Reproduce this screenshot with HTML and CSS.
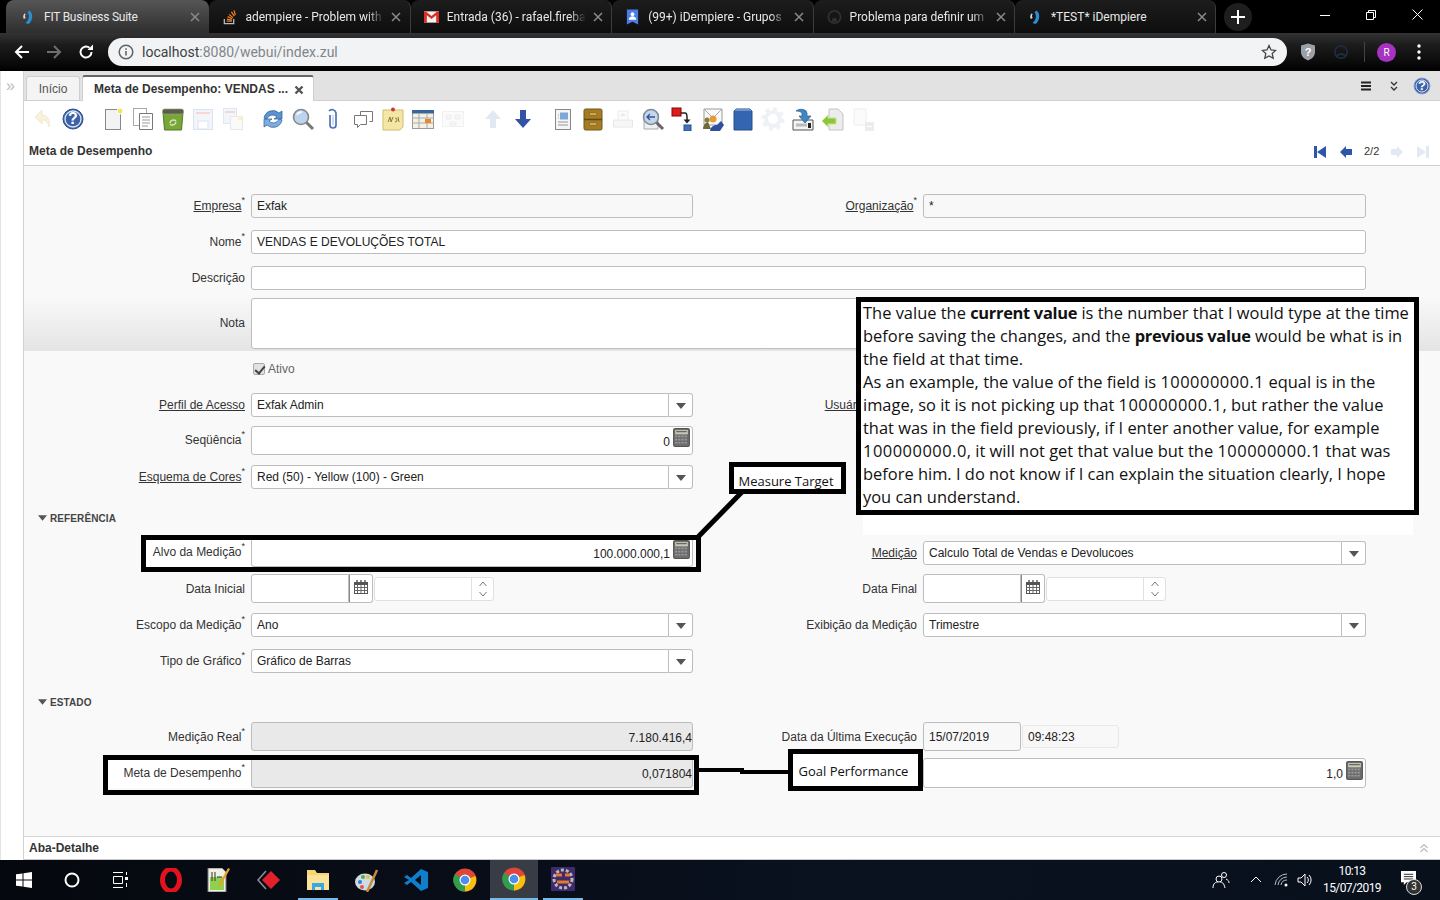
FILE: index.html
```html
<!DOCTYPE html>
<html lang="pt">
<head>
<meta charset="utf-8">
<title>Meta de Desempenho</title>
<link rel="stylesheet" href="styles.css">
</head>
<body>
<svg class="defs" width="0" height="0">
  <symbol id="calc" viewBox="0 0 16 18"><rect x="0.5" y="0.5" width="15" height="17" rx="1.5" fill="#6d6d6d" stroke="#555"/><rect x="2" y="2" width="12" height="4" fill="#c5cdb8"/><path d="M3 3.5h10" stroke="#555"/><path d="M2 8h12M2 11h12M2 14h12" stroke="#9a9a9a" stroke-width="1.6" stroke-dasharray="2 1"/></symbol>
  <symbol id="cal" viewBox="0 0 14 14"><rect x="0.5" y="2.5" width="13" height="11" fill="#fff" stroke="#555"/><rect x="0.5" y="2" width="13" height="3" fill="#555"/><path d="M3 0v3M7 0v3M11 0v3" stroke="#555" stroke-width="1.4"/><path d="M0 7.500h14M0 10.500h14M3.500 5v8M7 5v8M10.500 5v8" stroke="#666"/></symbol>
  <symbol id="caret" viewBox="0 0 10 6"><path d="M0 0h10L5 6z" fill="#555"/></symbol>
  <symbol id="spin" viewBox="0 0 10 18"><path d="M1.500 6 5 2l3.500 4M1.500 12 5 16l3.500-4" fill="none" stroke="#777"/></symbol>
  <symbol id="close" viewBox="0 0 10 10"><path d="M1 1l8 8M9 1l-8 8" stroke="#8a8a8a" stroke-width="1.500"/></symbol>
  <symbol id="swirl" viewBox="0 0 16 16"><path d="M9 1c4 3 4 9 0 14-2 .5-3 0-4-1 3-2 5-7 2-11z" fill="#2a8fd0"/><path d="M4 4c-2 2-2 4-1 6l2-1c-1-2-1-3 0-4z" fill="#cfd8dc"/></symbol>
</svg>

<header class="tabstrip">
  <div class="tab active"><svg class="fav"><use href="#swirl"/></svg><span class="tab-title">FIT Business Suite</span><svg class="tab-x"><use href="#close"/></svg></div>
  <div class="tab"><svg class="fav" viewBox="0 0 16 16"><path d="M2.500 10v5h10v-5" fill="none" stroke="#bcbbbb" stroke-width="1.400"/><path d="M5 12.500h5.500M5.200 10.200l5.400 1M6 7.600l5 2.300M7.500 5.200l4.200 3.500M10 2.600l3.200 4.500M12.800 1l1.500 5" stroke="#f48024" stroke-width="1.300"/></svg><span class="tab-title fade">adempiere - Problem with</span><svg class="tab-x"><use href="#close"/></svg></div>
  <div class="tab"><svg class="fav" viewBox="0 0 16 16"><rect y="2" width="16" height="12" fill="#f2f2f2"/><path d="M0 2v12h3V6l5 4 5-4v8h3V2h-2L8 7 2 2z" fill="#d93025"/></svg><span class="tab-title fade">Entrada (36) - rafael.fireba</span><svg class="tab-x"><use href="#close"/></svg></div>
  <div class="tab"><svg class="fav" viewBox="0 0 16 16"><path d="M2 0h12v16l-6-3-6 3z" fill="#4a7de8"/><circle cx="8" cy="5" r="2" fill="#fff"/><path d="M4 11c0-5 8-5 8 0z" fill="#fff"/></svg><span class="tab-title fade">(99+) iDempiere - Grupos</span><svg class="tab-x"><use href="#close"/></svg></div>
  <div class="tab"><svg class="fav" viewBox="0 0 16 16"><circle cx="8" cy="8" r="6.500" fill="none" stroke="#2f2f2f" stroke-width="2"/><path d="M5 13l1-4h4l1 4" fill="#2f2f2f"/></svg><span class="tab-title fade">Problema para definir um</span><svg class="tab-x"><use href="#close"/></svg></div>
  <div class="tab"><svg class="fav"><use href="#swirl"/></svg><span class="tab-title">*TEST* iDempiere</span><svg class="tab-x"><use href="#close"/></svg></div>
  <div class="newtab"><svg width="14" height="14" viewBox="0 0 14 14"><path d="M7 0v14M0 7h14" stroke="#fff" stroke-width="2"/></svg></div>
  <div class="winctl">
    <div class="winbtn"><svg width="10" height="10" viewBox="0 0 10 10"><path d="M0 5.500h10" stroke="#fff"/></svg></div>
    <div class="winbtn"><svg width="10" height="10" viewBox="0 0 10 10"><path d="M.5 2.500h7v7h-7zM2.500 2.500v-2h7v7h-2" fill="none" stroke="#fff"/></svg></div>
    <div class="winbtn"><svg width="11" height="11" viewBox="0 0 11 11"><path d="M.5.500l10 10M10.500.500l-10 10" stroke="#fff"/></svg></div>
  </div>
</header>

<nav class="browserbar">
  <svg class="nav-ico" viewBox="0 0 16 16"><path d="M15 8H2M8 2 2 8l6 6" fill="none" stroke="#fff" stroke-width="2"/></svg>
  <svg class="nav-ico" viewBox="0 0 16 16"><path d="M1 8h13M8 2l6 6-6 6" fill="none" stroke="#6e6e6e" stroke-width="2"/></svg>
  <svg class="nav-ico" viewBox="0 0 16 16"><path d="M13.500 8A5.500 5.500 0 1 1 11.500 3.800" fill="none" stroke="#fff" stroke-width="2"/><path d="M9.500 6H15V.500z" fill="#fff"/></svg>
  <div class="omnibox">
    <svg class="info" viewBox="0 0 16 16"><circle cx="8" cy="8" r="6.800" fill="none" stroke="#5f6368" stroke-width="1.500"/><path d="M8 7v4.500M8 4.300v1.500" stroke="#5f6368" stroke-width="1.600"/></svg>
    <span class="url"><span class="host">localhost</span>:8080/webui/index.zul</span>
    <svg class="star" viewBox="0 0 16 16"><path d="m8 1.500 2 4.400 4.700.500-3.500 3.200 1 4.700L8 11.900 3.800 14.300l1-4.700L1.300 6.400 6 5.900z" fill="none" stroke="#444" stroke-width="1.300"/></svg>
  </div>
  <div class="ext">
    <svg class="ext-ico" viewBox="0 0 16 18"><path d="M1 2.500 8 .5l7 2V9c0 4-3 7-7 8.500C4 16 1 13 1 9z" fill="#9aa0a6"/><text x="8" y="13" class="ext-q">?</text></svg>
    <svg class="ext-ico dim" viewBox="0 0 18 18"><circle cx="9" cy="9" r="7" fill="none" stroke="#1f2c3c" stroke-width="2"/><path d="M4 15c1-5 9-5 10 0" fill="none" stroke="#1f2c3c" stroke-width="2"/></svg>
    <span class="ext-sep"></span>
    <span class="avatar">R</span>
    <svg class="dots" viewBox="0 0 4 16"><circle cx="2" cy="2" r="1.700" fill="#fff"/><circle cx="2" cy="8" r="1.700" fill="#fff"/><circle cx="2" cy="14" r="1.700" fill="#fff"/></svg>
  </div>
</nav>

<div class="app">
  <aside class="rail"><span class="rail-chev">»</span></aside>
  <main class="main">
    <div class="doctabs">
      <div class="doctab">Início</div>
      <div class="doctab current"><span>Meta de Desempenho: VENDAS ...</span><svg class="doctab-x" viewBox="0 0 10 10"><path d="M1.500 1.500l7 7M8.500 1.500l-7 7" stroke="#555" stroke-width="2.400"/></svg></div>
      <div class="doctab-tools">
        <svg class="tool-ico" viewBox="0 0 12 12"><path d="M1 2.500h10M1 6h10M1 9.500h10" stroke="#222" stroke-width="2"/></svg>
        <svg class="tool-ico" viewBox="0 0 12 12"><path d="M3 2l3 3 3-3M3 7l3 3 3-3" fill="none" stroke="#333" stroke-width="1.300"/></svg>
        <svg class="tool-help" viewBox="0 0 18 18"><circle cx="9" cy="9" r="8" fill="#3b62a8" stroke="#8aa3cf"/><circle cx="9" cy="9" r="6" fill="none" stroke="#dfe7f3"/><text x="9" y="13" class="q">?</text></svg>
      </div>
    </div>

    <div class="icons">
      <button class="ic"><svg viewBox="0 0 24 24"><path d="M11 3 4 10l7 7v-4c4 0 6 2 7 7 1-7-1-12-7-12z" fill="#f8f2dd" stroke="#f3ead0"/></svg></button>
      <button class="ic"><svg viewBox="0 0 24 24"><circle cx="12" cy="12" r="10" fill="#3b62a8" stroke="#2d4d8a"/><circle cx="12" cy="12" r="8" fill="none" stroke="#dde6f4" stroke-width="1.300"/><text x="12" y="17" class="q big">?</text></svg></button>
      <button class="ic grp"><svg viewBox="0 0 24 24"><rect x="4.500" y="2.500" width="15" height="20" fill="#f3f3f3" stroke="#888"/><circle cx="19" cy="4" r="3" fill="#f4e16a" stroke="#fff"/></svg></button>
      <button class="ic"><svg viewBox="0 0 24 24"><rect x="2.500" y="1.500" width="13" height="17" fill="#fff" stroke="#aaa"/><path d="M8.500 6.500h13v16h-13z" fill="#fff" stroke="#777"/><path d="M11 10h8M11 13h8M11 16h8M11 19h6" stroke="#999"/></svg></button>
      <button class="ic"><svg viewBox="0 0 24 24"><path d="M2 5h20l-1.500 18h-17z" fill="#79a63a" stroke="#4f7a20"/><rect x="1.500" y="2" width="21" height="5" rx="2" fill="#5c5c4e" stroke="#8fa56a" stroke-width=".7"/><path d="M9 16a3.500 3.500 0 0 1 6-2M15 15a3.500 3.500 0 0 1-6 2" fill="none" stroke="#d7eab8" stroke-width="1.500"/></svg></button>
      <button class="ic"><svg viewBox="0 0 24 24"><rect x="2.500" y="2.500" width="19" height="20" fill="#f2f5fa" stroke="#dbe3f0"/><path d="M5 6h14" stroke="#f5d8d3" stroke-width="2"/><rect x="7" y="14" width="10" height="8" fill="#fff" stroke="#dbe3f0"/></svg></button>
      <button class="ic"><svg viewBox="0 0 24 24"><rect x="2.500" y="1.500" width="13" height="15" fill="#f2f5fa" stroke="#e1e7f2"/><path d="M4 5h10" stroke="#f5d8d3" stroke-width="2"/><rect x="9.500" y="9.500" width="12" height="13" fill="#fafafa" stroke="#e8e8e8"/><circle cx="19" cy="11" r="2.500" fill="#f7f3c8"/></svg></button>
      <button class="ic grp"><svg viewBox="0 0 24 24"><path d="M3 11a9 9 0 0 1 15-5l3-2v8h-8l3-2a6 6 0 0 0-10 2z" fill="#5b93d3" stroke="#2c5b98" stroke-width=".7"/><path d="M21 13a9 9 0 0 1-15 5l-3 2v-8h8l-3 2a6 6 0 0 0 10-2z" fill="#7eaee0" stroke="#2c5b98" stroke-width=".7"/></svg></button>
      <button class="ic"><svg viewBox="0 0 24 24"><path d="M15 15l7 7" stroke="#777" stroke-width="3"/><circle cx="10" cy="10" r="7.500" fill="#bcd5ee" stroke="#888" stroke-width="1.600"/><path d="M6 8a5 5 0 0 1 5-3" fill="none" stroke="#fff" stroke-width="1.500"/></svg></button>
      <button class="ic"><svg viewBox="0 0 24 24"><path d="M9 8v10a3 3 0 0 0 6 0V6a4 4 0 0 0-7-2" fill="none" stroke="#4d76b5" stroke-width="1.700"/><path d="M12 8v10" stroke="#b7c9e3" stroke-width="1.300"/></svg></button>
      <button class="ic"><svg viewBox="0 0 24 24"><path d="M9.500 4.500h12v10h-3M9.500 4.500v4" fill="#fff" stroke="#777"/><path d="M3.500 8.500h12v9h-6l-3 3v-3h-3z" fill="#fff" stroke="#777"/></svg></button>
      <button class="ic"><svg viewBox="0 0 24 24"><path d="M2 3h20v17l-3 3H2z" fill="#f4e7a5" stroke="#d2bd6c"/><path d="M7 15l2-5 1 5 2-5M14 11a2 2 0 1 1 0 4M17 10l1 5" fill="none" stroke="#8a7a3a"/><circle cx="12" cy="2.500" r="2" fill="#c8383a"/></svg></button>
      <button class="ic"><svg viewBox="0 0 24 24"><rect x="1.500" y="3.500" width="21" height="18" fill="#f3f0e6" stroke="#999"/><rect x="1" y="3" width="22" height="3.500" fill="#3a6598"/><path d="M1 11h22M1 16h22M8 6v15M16 6v15" stroke="#aaa"/><rect x="14" y="12" width="6" height="4" fill="#e9872a"/></svg></button>
      <button class="ic"><svg viewBox="0 0 24 24"><rect x="1.500" y="4.500" width="21" height="15" fill="#fbfbfb" stroke="#f1f1f1"/><path d="M5 8h5v4H5zM14 8h5v4h-5zM9 15h6v3H9z" fill="#f6f6f6" stroke="#eee"/></svg></button>
      <button class="ic grp"><svg viewBox="0 0 24 24"><path d="M12 3l8 9h-5v9H9v-9H4z" fill="#e3e9f4"/></svg></button>
      <button class="ic"><svg viewBox="0 0 24 24"><path d="M12 21l8-9h-5V3H9v9H4z" fill="#3352a6"/></svg></button>
      <button class="ic grp"><svg viewBox="0 0 24 24"><rect x="4.500" y="2.500" width="15" height="20" fill="#f5f5f5" stroke="#888"/><rect x="9" y="5.500" width="8" height="7" fill="#7fa7d6"/><path d="M7 8h1M7 11h1M7 15h10M7 18h10" stroke="#999"/></svg></button>
      <button class="ic"><svg viewBox="0 0 24 24"><rect x="3" y="2" width="18" height="21" rx="1.500" fill="#a77b22" stroke="#6b5a25"/><path d="M3 12.500h18" stroke="#5c4c1d" stroke-width="1.500"/><rect x="8.500" y="6" width="7" height="2" fill="#e7c46b" stroke="#6b5a25" stroke-width=".5"/><rect x="8.500" y="16" width="7" height="2" fill="#e7c46b" stroke="#6b5a25" stroke-width=".5"/></svg></button>
      <button class="ic"><svg viewBox="0 0 24 24"><path d="M2.500 13h19v7h-19z" fill="#f7f7f7" stroke="#e8e8e8"/><path d="M7 4h10v9H7z" fill="#fbfbfb" stroke="#ececec"/><path d="M12 6l3 3H9z" fill="#e9e9e9"/></svg></button>
      <button class="ic"><svg viewBox="0 0 24 24"><path d="M3 6h14v16H3z" fill="#eef0f2" stroke="#aaa"/><path d="M15 15l7 7" stroke="#666" stroke-width="3"/><circle cx="10" cy="10" r="7.500" fill="#c5d6e8" stroke="#7c8a99" stroke-width="1.500"/><path d="M14 10H6m3-3-3 3 3 3" fill="none" stroke="#3352a6" stroke-width="1.300"/></svg></button>
      <button class="ic"><svg viewBox="0 0 24 24"><rect x="1" y="1" width="9" height="8" fill="#d81e1e" stroke="#8e0000"/><path d="M10 6h4c2 0 2 2 2 4v4" fill="none" stroke="#222" stroke-width="1.500"/><path d="M12.500 12.500h7L16 16.500z" fill="#222"/><rect x="13" y="18" width="7" height="6" fill="#3f72b8" stroke="#24528f"/></svg></button>
      <button class="ic"><svg viewBox="0 0 24 24"><path d="M3 2h18v16H3z" fill="#fafafa" stroke="#999"/><path d="M3 2l9 9 9-9" fill="none" stroke="#aaa"/><circle cx="12" cy="12" r="3.500" fill="#e49a3d"/><path d="M2 22c0-6 5-7 5-7l3 7z" fill="#6f6a33"/><circle cx="6" cy="13" r="2.500" fill="#8b7d3a"/><path d="M9 24c1-5 4-6 7-6l4-4 3 4-4 6z" fill="#2c4fa0"/></svg></button>
      <button class="ic"><svg viewBox="0 0 24 24"><path d="M3 4l2-2h14l2 2v19H3z" fill="#3465b0" stroke="#274c87"/><path d="M3 4l2-2h14l2 2z" fill="#6a92cc"/></svg></button>
      <button class="ic"><svg viewBox="0 0 24 24"><circle cx="12" cy="12" r="7" fill="none" stroke="#eef1f6" stroke-width="4"/><circle cx="12" cy="12" r="10" fill="none" stroke="#eef1f6" stroke-width="3.500" stroke-dasharray="4 3.800"/></svg></button>
      <button class="ic"><svg viewBox="0 0 24 24"><path d="M2 13h20v10H2z" fill="#f4f4f4" stroke="#555"/><path d="M5 18h11" stroke="#bbb" stroke-width="3"/><rect x="17" y="16" width="3" height="5" fill="#222"/><path d="M5 4a6 4 0 0 1 11 2v3h4l-6 7-6-7h3V7c0-2-3-3-6-3z" fill="#3f86c2" stroke="#276094" stroke-width=".7"/></svg></button>
      <button class="ic"><svg viewBox="0 0 24 24"><path d="M8 2h9l5 5v16H8z" fill="#ececec" stroke="#c4c4c4"/><path d="M1 14l6-6v3h8v6H7v3z" fill="#8cc63f" stroke="#c6e58d"/></svg></button>
      <button class="ic"><svg viewBox="0 0 24 24"><path d="M3 2h12v16H3z" fill="#fbfbfb" stroke="#eee"/><rect x="14" y="15" width="9" height="9" fill="#ececec"/><path d="M16 19.500h5" stroke="#fff"/></svg></button>
    </div>

    <div class="titlebar">
      <strong class="title">Meta de Desempenho</strong>
      <div class="pager">
        <svg class="pg" viewBox="0 0 14 12"><path d="M1 0h3v12H1zM13 0v12L4 6z" fill="#2f55a8"/></svg>
        <svg class="pg" viewBox="0 0 14 12"><path d="M1 6l6-6v3h6v6H7v3z" fill="#2f55a8"/></svg>
        <span class="pg-text">2/2</span>
        <svg class="pg" viewBox="0 0 14 12"><path d="M13 6 7 0v3H1v6h6v3z" fill="#e3e8f3"/></svg>
        <svg class="pg" viewBox="0 0 14 12"><path d="M13 0h-3v12h3zM1 0v12l9-6z" fill="#e3e8f3"/></svg>
      </div>
    </div>

    <section class="form">
      <div class="row">
        <label class="lb"><u>Empresa</u><sup>*</sup></label><div class="fld ro">Exfak</div>
        <label class="lb"><u>Organização</u><sup>*</sup></label><div class="fld ro">*</div>
      </div>
      <div class="row">
        <label class="lb">Nome<sup>*</sup></label><div class="fld wide">VENDAS E DEVOLUÇÕES TOTAL</div>
      </div>
      <div class="row">
        <label class="lb">Descrição</label><div class="fld wide"></div>
      </div>
      <div class="row band">
        <label class="lb">Nota</label><div class="fld wide tall"></div>
      </div>
      <div class="row">
        <span class="lb"></span><label class="check"><input type="checkbox" checked disabled>Ativo</label>
      </div>
      <div class="row">
        <label class="lb"><u>Perfil de Acesso</u></label><div class="combo"><div class="fld">Exfak Admin</div><span class="combo-btn"><svg class="caret"><use href="#caret"/></svg></span></div>
        <label class="lb usr"><u>Usuário</u></label>
      </div>
      <div class="row num">
        <label class="lb">Seqüência<sup>*</sup></label><div class="fld number">0<svg class="calc"><use href="#calc"/></svg></div>
      </div>
      <div class="row">
        <label class="lb"><u>Esquema de Cores</u><sup>*</sup></label><div class="combo"><div class="fld">Red (50) - Yellow (100) - Green</div><span class="combo-btn"><svg class="caret"><use href="#caret"/></svg></span></div>
      </div>

      <h3 class="sec"><svg class="sec-caret"><use href="#caret"/></svg>REFERÊNCIA</h3>

      <div class="row num">
        <label class="lb lit-a">Alvo da Medição<sup>*</sup></label><div class="fld number">100.000.000,1<svg class="calc"><use href="#calc"/></svg></div>
        <label class="lb low"><u>Medição</u></label><div class="combo mid-field"><div class="fld">Calculo Total de Vendas e Devolucoes</div><span class="combo-btn"><svg class="caret"><use href="#caret"/></svg></span></div>
      </div>
      <div class="row num">
        <label class="lb low">Data Inicial</label><div class="dt"><div class="dt-in"><div class="fld"></div><span class="dt-btn"><svg class="calico"><use href="#cal"/></svg></span></div><div class="tm"><span class="tm-val"></span><span class="tm-btn"><svg class="spin"><use href="#spin"/></svg></span></div></div>
        <label class="lb low">Data Final</label><div class="dt"><div class="dt-in"><div class="fld"></div><span class="dt-btn"><svg class="calico"><use href="#cal"/></svg></span></div><div class="tm"><span class="tm-val"></span><span class="tm-btn"><svg class="spin"><use href="#spin"/></svg></span></div></div>
      </div>
      <div class="row">
        <label class="lb">Escopo da Medição<sup>*</sup></label><div class="combo"><div class="fld">Ano</div><span class="combo-btn"><svg class="caret"><use href="#caret"/></svg></span></div>
        <label class="lb">Exibição da Medição</label><div class="combo"><div class="fld">Trimestre</div><span class="combo-btn"><svg class="caret"><use href="#caret"/></svg></span></div>
      </div>
      <div class="row">
        <label class="lb">Tipo de Gráfico<sup>*</sup></label><div class="combo"><div class="fld">Gráfico de Barras</div><span class="combo-btn"><svg class="caret"><use href="#caret"/></svg></span></div>
      </div>

      <h3 class="sec"><svg class="sec-caret"><use href="#caret"/></svg>ESTADO</h3>

      <div class="row num">
        <label class="lb low">Medição Real<sup>*</sup></label><div class="fld number gray flush">7.180.416,4</div>
        <label class="lb low">Data da Última Execução</label><div class="dt"><div class="fld date-ro">15/07/2019</div><div class="fld time-ro">09:48:23</div></div>
      </div>
      <div class="row num">
        <label class="lb lit-b">Meta de Desempenho<sup>*</sup></label><div class="fld number gray flush">0,071804</div>
        <label class="lb"></label><div class="fld number">1,0<svg class="calc"><use href="#calc"/></svg></div>
      </div>
    </section>

    <footer class="detail">
      <strong class="title">Aba-Detalhe</strong>
      <svg class="detail-ico" viewBox="0 0 12 12"><path d="M2.500 6 6 2.500 9.500 6M2.500 10 6 6.500 9.500 10" fill="none" stroke="#bbb" stroke-width="1.200"/></svg>
    </footer>
  </main>
</div>

<footer class="taskbar">
  <svg class="tb win" viewBox="0 0 16 16"><path d="M0 2.300 6.500 1.400v6.100H0zM7.500 1.300 16 0v7.500H7.500zM0 8.500h6.500v6.100L0 13.700zM7.500 8.500H16V16l-8.500-1.300z" fill="#fff"/></svg>
  <svg class="tb cortana" viewBox="0 0 16 16"><circle cx="8" cy="8" r="6.500" fill="none" stroke="#fff" stroke-width="2"/></svg>
  <svg class="tb taskview" viewBox="0 0 16 16"><path d="M1 .5h10M1 15.500h10M1.500 4.500h9v7h-9z" fill="none" stroke="#fff"/><path d="M13 5h3v3h-3z" fill="#fff"/><path d="M14.500 11v4M14.500 0v3" stroke="#fff"/></svg>
  <svg class="tb opera" viewBox="0 0 24 24"><ellipse cx="12" cy="12" rx="8.500" ry="11" fill="none" stroke="#e3131d" stroke-width="5"/></svg>
  <svg class="tb npp" viewBox="0 0 24 24"><path d="M2 0h14l4 4v20H2z" fill="#eef0e4" stroke="#777"/><rect x="4" y="9" width="14" height="13" fill="#8fd14f"/><path d="M6 4v9M9 4v9M11 9h5" stroke="#333"/><path d="M13 16 22 0l2 1-9 16-3 2z" fill="#e7a12c"/></svg>
  <svg class="tb anyd" viewBox="0 0 24 24"><path d="M9 3l-8 9 8 9" fill="none" stroke="#8a8f96" stroke-width="1.600"/><path d="M14 3l9 9-9 9-9-9z" fill="#e2202b"/></svg>
  <div class="tb-open"><svg class="tb-in" viewBox="0 0 24 24"><path d="M1 3h8l2 3h12v17H1z" fill="#f7d774"/><path d="M1 8h22v15H1z" fill="#fbe49a"/><path d="M6 16h12v7h-3v-3H9v3H6z" fill="#37a7e8"/></svg></div>
  <svg class="tb paint" viewBox="0 0 24 24"><ellipse cx="10" cy="14" rx="10" ry="8.500" fill="#cfdbe5"/><circle cx="5" cy="14" r="2" fill="#2e7fd0"/><circle cx="8" cy="9" r="2" fill="#5aa84a"/><circle cx="13" cy="9" r="2" fill="#e8c239"/><circle cx="7" cy="19" r="2" fill="#e05a3a"/><path d="M12 24 22 2" stroke="#c58a3c" stroke-width="2.500"/></svg>
  <svg class="tb vscode" viewBox="0 0 24 24"><path d="M17 1 24 4v16l-7 3L7 14l-4 3-3-2 5-3-5-3 3-2 4 3zM17 7l-6 5 6 5z" fill="#0f7fcc"/></svg>
  <svg class="tb chrome" viewBox="0 0 24 24"><circle cx="12" cy="12" r="11.500" fill="#e0453a"/><path d="M12 12l10.500-4A11.500 11.500 0 0 1 12 23.500z" fill="#f4c20d"/><path d="M12 12 2 18a11.500 11.500 0 0 1 0-12l5 3z" fill="#2e9e4f"/><path d="M12 12 2 18a11.500 11.500 0 0 0 10 5.500z" fill="#2e9e4f"/><circle cx="12" cy="12" r="5.500" fill="#fff"/><circle cx="12" cy="12" r="4.300" fill="#4a8ef0"/></svg>
  <div class="tb-active"><svg class="tb-in" viewBox="0 0 24 24"><circle cx="12" cy="12" r="11.500" fill="#e0453a"/><path d="M12 12l10.500-4A11.500 11.500 0 0 1 12 23.500z" fill="#f4c20d"/><path d="M12 12 2 18a11.500 11.500 0 0 1 0-12l5 3z" fill="#2e9e4f"/><path d="M12 12 2 18a11.500 11.500 0 0 0 10 5.500z" fill="#2e9e4f"/><circle cx="12" cy="12" r="5.500" fill="#fff"/><circle cx="12" cy="12" r="4.300" fill="#4a8ef0"/></svg></div>
  <div class="tb-java"><svg class="tb-in" viewBox="0 0 24 24"><rect width="24" height="24" rx="1" fill="#3f2a6b"/><circle cx="12" cy="12" r="9" fill="none" stroke="#b8b8b8" stroke-width="3" stroke-dasharray="3 2"/><path d="M5 8h6M14 8h5M6 15h12" stroke="#e8792a" stroke-width="3"/></svg></div>
  <div class="tray">
    <svg class="tr people" viewBox="0 0 18 18"><circle cx="7" cy="8" r="3" fill="none" stroke="#fff"/><path d="M1 17c0-5 3-6 5-6M8 11c2 0 4 1 5 6" fill="none" stroke="#fff"/><circle cx="12" cy="4" r="2.500" fill="none" stroke="#fff"/><path d="M14 8c2 1 3 2 3 4" fill="none" stroke="#fff"/></svg>
    <svg class="tr chev" viewBox="0 0 12 12"><path d="M1 8l5-5 5 5" fill="none" stroke="#fff"/></svg>
    <svg class="tr wifi" viewBox="0 0 16 16"><path d="M1 13A12 12 0 0 1 13 2M4 13a9 9 0 0 1 9-8M7 13a6 6 0 0 1 6-5" fill="none" stroke="#b9bdc2"/><circle cx="12" cy="13" r="1.500" fill="#fff"/></svg>
    <svg class="tr vol" viewBox="0 0 16 16"><path d="M1 6h3l4-4v12l-4-4H1z" fill="none" stroke="#fff"/><path d="M10 5a4 4 0 0 1 0 6M12 3a7 7 0 0 1 0 10" fill="none" stroke="#fff"/></svg>
    <div class="clock"><span>10:13</span><span>15/07/2019</span></div>
    <div class="notif"><svg class="notif-ico" viewBox="0 0 16 16"><path d="M0 0h16v12H6l-3 3v-3H0z" fill="#fff"/><path d="M3 3.500h10M3 6h10M3 8.500h10" stroke="#222"/></svg><span class="badge">3</span></div>
  </div>
</footer>

<!-- annotations drawn over the screenshot -->
<div class="patch"></div>
<div class="note"><p class="note-text">The value the <b>current value</b> is the number that I would type at the time<br>before saving the changes, and the <b>previous value</b> would be what is in<br>the field at that time.<br>As an example, the value of the field is <span class="d">100000000.1</span> equal is in the<br>image, so it is not picking up that <span class="d">100000000.1</span>, but rather the value<br>that was in the field previously, if I enter another value, for example<br><span class="d">100000000.0</span>, it will not get that value but the <span class="d">100000000.1</span> that was<br>before him. I do not know if I can explain the situation clearly, I hope<br>you can understand.</p></div>
<div class="ring ring-target"></div>
<div class="ring ring-goal"></div>
<div class="tag tag-target">Measure Target</div>
<div class="tag tag-goal">Goal Performance</div>
<svg class="links" width="1440" height="900" viewBox="0 0 1440 900"><path d="M742 492 697 538" fill="none" stroke="#000" stroke-width="5"/><path d="M699 770H742V772H790" fill="none" stroke="#000" stroke-width="4"/></svg>
</body>
</html>
```

FILE: styles.css
```css
* { box-sizing: border-box; }
html, body { margin: 0; height: 100%; }
body {
  position: relative;
  width: 1440px;
  height: 900px;
  overflow: hidden;
  display: flex;
  flex-direction: column;
  font: 12px/1.2 "Liberation Sans", Arial, sans-serif;
  color: #333;
  background: #000;
}
.defs { position: absolute; }

/* browser tab strip */
.tabstrip {
  height: 33px;
  flex: none;
  display: flex;
  align-items: stretch;
  padding-left: 8px;
  background: #000;
  font-family: Roboto, sans-serif;
}
.tab {
  width: 201.4px;
  flex: none;
  display: flex;
  align-items: center;
  padding: 1px 0 0 13px;
  background: linear-gradient(#1d1d1d, #0d0d0d);
  border-right: 1px solid #3c3c3c;
  border-radius: 8px 8px 0 0;
  color: #e8e8e8;
}
.tab.active {
  background: linear-gradient(#565656, #2e2e2e);
  border-right: 0;
  margin-left: -2px;
  width: 203.4px;
  padding-left: 15px;
}
.fav { width: 15px; height: 16px; flex: none; }
.tab-title {
  width: 139px;
  margin-left: 8px;
  white-space: nowrap;
  overflow: hidden;
}
.active .tab-title { letter-spacing: -.25px; }
.tab-title.fade {
  -webkit-mask-image: linear-gradient(to right, #000 88%, transparent);
  mask-image: linear-gradient(to right, #000 88%, transparent);
}
.tab-x { width: 10px; height: 10px; margin-left: 7px; flex: none; }
.newtab {
  width: 28px; height: 28px;
  margin: 3px 0 0 8px;
  border-radius: 50%;
  background: #1e1e1e;
  display: flex; align-items: center; justify-content: center;
}
.winctl { margin-left: auto; display: flex; height: 29px; }
.winbtn { width: 46px; display: flex; align-items: center; justify-content: center; }

/* browser toolbar */
.browserbar {
  height: 38px;
  flex: none;
  display: flex;
  align-items: center;
  padding: 5px 0 5px 14px;
  background: linear-gradient(#333 0, #1c1c1c 12px, #0a0a0a 30px, #000 100%);
}
.nav-ico { width: 16px; height: 16px; margin-right: 16px; flex: none; }
.omnibox {
  width: 1179px;
  margin-left: -2px;
  height: 28px;
  border-radius: 14px;
  background: #f1f3f4;
  display: flex;
  align-items: center;
  padding: 0 10px;
  font: 14px Roboto, sans-serif;
  color: #80868b;
}
.info { width: 16px; height: 16px; flex: none; }
.url { margin-left: 8px; }
.host { color: #3c4043; }
.star { width: 16px; height: 16px; margin-left: auto; }
.ext { display: flex; align-items: center; margin-left: 13px; }
.ext-ico { width: 16px; height: 18px; margin-right: 17px; }
.ext-q { font: bold 11px "Liberation Sans", sans-serif; fill: #fff; text-anchor: middle; }
.ext-sep { width: 1px; height: 20px; background: #444; margin-left: -2px; margin-right: 12px; }
.avatar {
  width: 19px; height: 19px; border-radius: 50%;
  background: #a633c1; color: #fff;
  display: flex; align-items: center; justify-content: center;
  font: 10px Roboto, sans-serif;
}
.dots { width: 4px; height: 16px; margin-left: 21px; }

/* app */
.app { height: 789px; flex: none; display: flex; background: #f9f9f9; }
.rail { width: 24px; flex: none; background: #fff; border-right: 1px solid #d2d2d2; border-left: 1px solid #e4e4e4; padding: 7px 0 0 5px; }
.rail-chev { color: #bbb; font-size: 16px; line-height: 1; }
.main { flex: 1; display: flex; flex-direction: column; min-width: 0; }

.doctabs {
  height: 30px; flex: none;
  display: flex; align-items: flex-end;
  padding-left: 2px;
  background: #e2e2e2;
  border-bottom: 1px solid #cfcfcf;
}
.doctab {
  height: 24px; width: 54px;
  display: flex; align-items: center; justify-content: center;
  padding-top: 1px;
  background: #f4f4f4;
  border: 1px solid #cfcfcf; border-bottom: 0;
  border-radius: 3px 3px 0 0;
  color: #555;
}
.doctab.current {
  width: 232px; height: 26px;
  margin-left: 2px; margin-bottom: -1px;
  background: #fff;
  border-top: 2px solid #666;
  justify-content: flex-start;
  padding-left: 11px;
  font-weight: bold;
  color: #333;
}
.doctab-x { width: 10px; height: 10px; margin-left: 6px; }
.doctab-tools { margin-left: auto; height: 100%; display: flex; align-items: center; padding-right: 9px; }
.tool-ico { width: 12px; height: 12px; margin-right: 13px; }
.tool-ico:first-child { margin-right: 16px; }
.tool-help { width: 18px; height: 18px; }
.q { font: bold 13px "Liberation Sans", sans-serif; fill: #fff; text-anchor: middle; }
.q.big { font-size: 16px; }

.icons { height: 35px; flex: none; display: flex; padding: 6px 0 0 4px; background: #fff; }
.ic { width: 30px; height: 24px; padding: 0; border: 0; background: none; display: flex; justify-content: center; }
.ic svg { width: 24px; height: 24px; }
.ic.grp { margin-left: 10px; }

.titlebar {
  height: 30px; flex: none;
  display: flex; align-items: center;
  padding: 2px 10px 0 5px;
  background: #fff;
  border-bottom: 1px solid #cfcfcf;
}
.title { font-weight: bold; color: #333; }
.pager { margin-left: auto; display: flex; align-items: center; padding-top: 1px; }
.pg { width: 14px; height: 12px; margin-left: 12px; }
.pg-text { margin-left: 11px; margin-right: -2px; font-size: 11px; width: 16px; }

/* form */
.form { flex: 1; padding-top: 22px; background: #f9f9f9; }
.row { display: grid; grid-template-columns: 227px 442px 230px 443px; height: 36px; padding: 6px 0; align-items: center; }
.row.num { padding: 3px 0 4px; }
.row.band {
  height: 55px; padding: 2px 0;
  background: linear-gradient(#f9f9f9, #e4e4e4);
}
.lb { display: block; padding-right: 6px; text-align: right; color: #333; white-space: nowrap; }
.lb u { color: #333; }
sup { font-size: 9px; line-height: 0; vertical-align: 7px; margin-left: 0; }
.lb.usr { padding-right: 57px; }
.lb.low { padding-top: 1px; }
.lit-a { background: linear-gradient(to right, transparent 122px, #fff 122px); align-self: stretch; line-height: 29px; }
.lit-b { background: linear-gradient(to right, transparent 84px, #fff 84px); align-self: stretch; line-height: 30px; }

.fld {
  height: 100%;
  min-width: 0;
  display: flex; align-items: center;
  padding-left: 5px;
  background: #fff;
  border: 1px solid #bdbdbd;
  border-radius: 3px;
  color: #222;
  white-space: nowrap;
}
.ro { background: #f8f8f8; }
.wide { grid-column: 2 / 5; }
.tall { height: 51px; }
.gray { background: #e9e9e9; }
.number { justify-content: flex-end; padding: 3px 2px 0 0; }
.number.flush { padding-right: 0; }
.calc { width: 17px; height: 19px; margin-left: 3px; margin-top: -9px; flex: none; }

.check { display: flex; align-items: center; padding-left: 1px; color: #666; }
.check input {
  appearance: none;
  -webkit-appearance: none;
  position: relative;
  width: 12px; height: 12px;
  margin: 0 3px 0 1px;
  background: #e2e2e2;
  border: 1px solid #aaa;
  border-radius: 2px;
}
.check input::after {
  content: "";
  position: absolute;
  left: 3px; top: 0;
  width: 4px; height: 8px;
  border: solid #444;
  border-width: 0 2px 2px 0;
  transform: rotate(40deg);
}

.combo { height: 100%; display: flex; }
.mid-field { height: 24px; }
.mid-field .fld { padding-top: 1px; }
.combo .fld { flex: 1; border-radius: 3px 0 0 3px; }
.combo-btn {
  width: 24px; flex: none;
  display: flex; align-items: center; justify-content: center;
  background: #fff;
  border: 1px solid #bdbdbd; border-left: 0;
  border-radius: 0 3px 3px 0;
}
.caret { width: 10px; height: 6px; margin-top: 2px; }

.sec {
  height: 40px; margin: 0; padding-top: 18px;
  padding-left: 14px;
  display: flex; align-items: flex-start;
  font-size: 10px; font-weight: bold; letter-spacing: .1px; color: #444; line-height: 12px;
}
.sec-caret { width: 9px; height: 6px; margin: 2px 3px 0 0; }

.dt { height: 100%; display: flex; align-items: center; }
.dt-in { width: 122px; height: 100%; display: flex; }
.dt-in .fld { flex: 1; border-radius: 3px 0 0 3px; }
.dt-btn {
  width: 24px; flex: none;
  display: flex; justify-content: center; padding-top: 5px;
  background: #fff;
  border: 1px solid #bdbdbd; border-left-color: #888;
  border-radius: 0 3px 3px 0;
}
.calico { width: 14px; height: 14px; }
.tm {
  width: 120px; height: 24px; margin-left: 1px;
  display: flex;
  background: #fff;
  border: 1px solid #e0e0e0;
  border-radius: 3px;
}
.tm-val { flex: 1; }
.tm-btn { width: 22px; border-left: 1px solid #e0e0e0; display: flex; align-items: center; justify-content: center; }
.spin { width: 10px; height: 18px; }
.date-ro { width: 98px; flex: none; background: #f8f8f8; padding-top: 1px; }
.time-ro { width: 97px; height: 23px; flex: none; margin-left: 1px; background: #f8f8f8; border-color: #e8e8e8; padding-top: 1px; }

.detail {
  height: 24px; flex: none;
  display: flex; align-items: center; justify-content: space-between;
  padding: 0 10px 0 5px;
  background: #fff;
  border-top: 1px solid #d8d8d8;
  border-bottom: 1px solid #c8c8c8;
}
.detail-ico { width: 12px; height: 12px; }

/* taskbar */
.taskbar {
  height: 40px; flex: none;
  display: flex; align-items: center;
  background: linear-gradient(to right, #05080e, #0a1220 60%, #08101c);
  color: #fff;
  font-family: Roboto, sans-serif;
}
.tb { flex: none; height: 24px; width: 24px; }
.win { width: 16px; height: 16px; margin-left: 16px; }
.cortana { width: 16px; height: 16px; margin-left: 32px; }
.taskview { width: 16px; height: 16px; margin-left: 32px; }
.opera { margin-left: 31px; }
.npp { margin-left: 23px; }
.anyd { margin-left: 27px; }
.tb-open {
  width: 40px; height: 40px; margin-left: 17px;
  display: flex; align-items: center; justify-content: center;
  border-bottom: 2px solid #76b9ed;
}
.paint { margin-left: 17px; }
.vscode { margin-left: 25px; }
.chrome { margin-left: 25px; }
.tb-active {
  width: 48px; height: 40px; margin-left: 13px;
  display: flex; align-items: center; justify-content: center;
  background: #383c44;
  border-bottom: 2px solid #76b9ed;
}
.tb-java {
  width: 40px; height: 40px; margin-left: 5px;
  display: flex; align-items: center; justify-content: center;
  border-bottom: 2px solid #76b9ed;
}
.tb-in { width: 24px; height: 24px; }
.tray { margin-left: auto; display: flex; align-items: center; height: 100%; }
.tr { flex: none; }
.people { width: 18px; height: 18px; margin-right: 20px; }
.chev { width: 12px; height: 12px; margin-right: 12px; }
.wifi { width: 16px; height: 16px; margin-right: 7px; }
.vol { width: 16px; height: 16px; margin-right: 5px; }
.clock { width: 68px; display: flex; flex-direction: column; align-items: center; font-size: 12px; line-height: 17px; letter-spacing: -.6px; }
.notif { width: 30px; height: 30px; margin: 0 17px 0 7px; position: relative; display: flex; align-items: center; justify-content: center; }
.notif-ico { width: 17px; height: 15px; margin-top: -4px; }
.badge {
  position: absolute; right: 1px; bottom: 0;
  width: 16px; height: 16px; border-radius: 50%;
  background: #333; border: 1px solid #ddd; color: #fff;
  display: flex; align-items: center; justify-content: center;
  font-size: 10px;
}

/* annotations */
.patch { position: absolute; left: 863px; top: 500px; width: 550px; height: 35px; background: #fff; }
.note {
  position: absolute; left: 856px; top: 297px;
  width: 563px; height: 218px;
  padding-left: 2px;
  background: #fff;
  border: 5px solid #000;
  color: #111;
  white-space: nowrap;
}
.note-text { margin: -1px 0 0; font: 16.45px/23px "Open Sans", sans-serif; }
.note-text b { letter-spacing: -.3px; }
.note-text .d { letter-spacing: .5px; }
.ring { position: absolute; border: 5px solid #000; }
.ring-target { left: 141px; top: 535px; width: 560px; height: 37px; }
.ring-goal { left: 103px; top: 755px; width: 596px; height: 40px; }
.tag {
  position: absolute;
  display: flex; align-items: center; justify-content: center;
  background: #fff;
  border: 5px solid #000;
  font: 13px "Open Sans", sans-serif;
  color: #111;
}
.tag-target { left: 729px; top: 462px; width: 117px; height: 32px; padding: 6px 3px 0 0; }
.tag-goal { left: 788px; top: 749px; width: 135px; height: 42px; padding: 2px 4px 0 0; }
.links { position: absolute; left: 0; top: 0; pointer-events: none; }
```
